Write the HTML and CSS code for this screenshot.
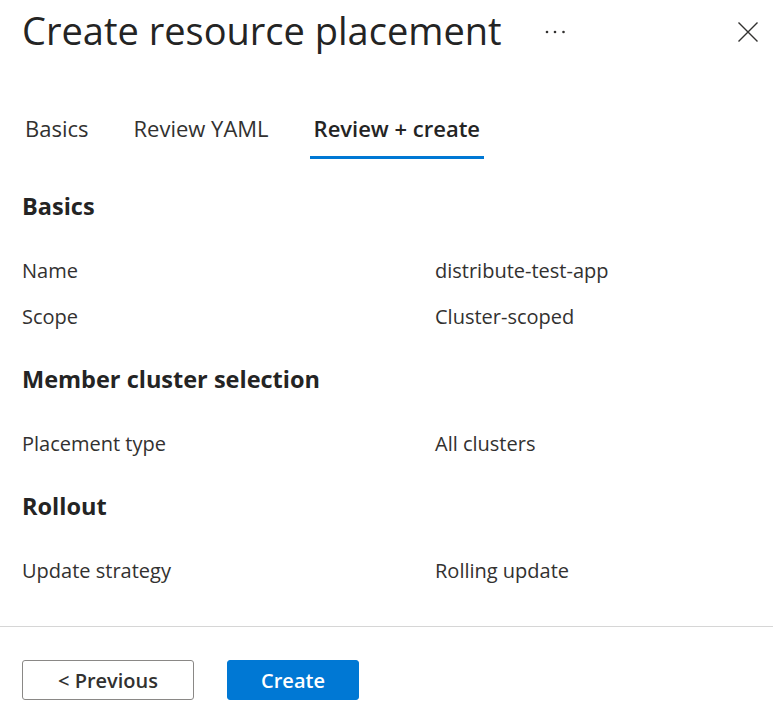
FILE: index.html
```html
<!DOCTYPE html>
<html lang="en">
<head>
  <meta charset="UTF-8" />
  <title>Create resource placement</title>
  <link rel="stylesheet" href="styles.css">
</head>
<body>
  <div class="blade">
    <div class="header">
      <h1>Create resource placement</h1>
      <svg class="more" width="20" height="4" viewBox="0 0 20 4"><circle cx="2" cy="2" r="1.3" fill="#323130"/><circle cx="10" cy="2" r="1.3" fill="#323130"/><circle cx="18.5" cy="2" r="1.3" fill="#323130"/></svg>
      <span class="spacer"></span>
      <svg class="close" width="20" height="20" viewBox="0 0 20 20"><path d="M0.5 0.5 L19.5 19.5 M19.5 0.5 L0.5 19.5" stroke="#323130" stroke-width="1.4" fill="none"/></svg>
    </div>

    <div class="tabs">
      <div class="tab">Basics</div>
      <div class="tab">Review YAML</div>
      <div class="tab active">Review + create</div>
    </div>

    <div class="content">
      <h2>Basics</h2>
      <div class="row"><span class="label">Name</span><span class="value">distribute-test-app</span></div>
      <div class="row"><span class="label">Scope</span><span class="value">Cluster-scoped</span></div>

      <h2>Member cluster selection</h2>
      <div class="row"><span class="label">Placement type</span><span class="value">All clusters</span></div>

      <h2>Rollout</h2>
      <div class="row"><span class="label">Update strategy</span><span class="value">Rolling update</span></div>
    </div>

    <div class="footer">
      <button class="btn">&lt; Previous</button>
      <button class="btn primary">Create</button>
    </div>
  </div>
</body>
</html>
```

FILE: styles.css
```css
body { margin: 0; background: #fff; color: #323130; font-family: "Segoe UI", "Open Sans", sans-serif; }
.blade { width: 773px; height: 711px; display: flex; flex-direction: column; }
.header { display: flex; align-items: center; padding: 4px 15px 0 22px; height: 52px; }
h1 { margin: 0; font-size: 38px; font-weight: 400; line-height: 52px; color: #242424; white-space: nowrap; }
.more { margin-left: 43px; margin-top: 4px; }
.spacer { flex: 1; }
.close { margin-top: 3px; }
.tabs { display: flex; gap: 37px; margin-top: 57px; padding-left: 21px; }
.tab { padding: 0 4px 13px; line-height: 30px; font-size: 22px; border-bottom: 3px solid transparent; }
.tab.active { color: #242424; font-weight: 600; border-bottom-color: #0078d4; }
.content { padding: 0 22px; margin-top: 31px; flex: 1; }
h2 { margin: 24px 0 25px; font-size: 23.5px; font-weight: 700; line-height: 32px; color: #242424; }
h2:first-child { margin-top: 0; }
.row { display: flex; height: 46px; align-items: center; font-size: 20px; }
.label { width: 413px; }
.footer { border-top: 1px solid #d6d6d6; padding: 33px 22px 11px; display: flex; gap: 33px; }
.btn { height: 40px; font-family: inherit; font-size: 20px; font-weight: 600; border-radius: 3px; border: 1px solid #8a8886; background: #fff; color: #323130; width: 172px; }
.btn.primary { background: #0078d4; border-color: #0078d4; color: #fff; width: 132px; }
```
